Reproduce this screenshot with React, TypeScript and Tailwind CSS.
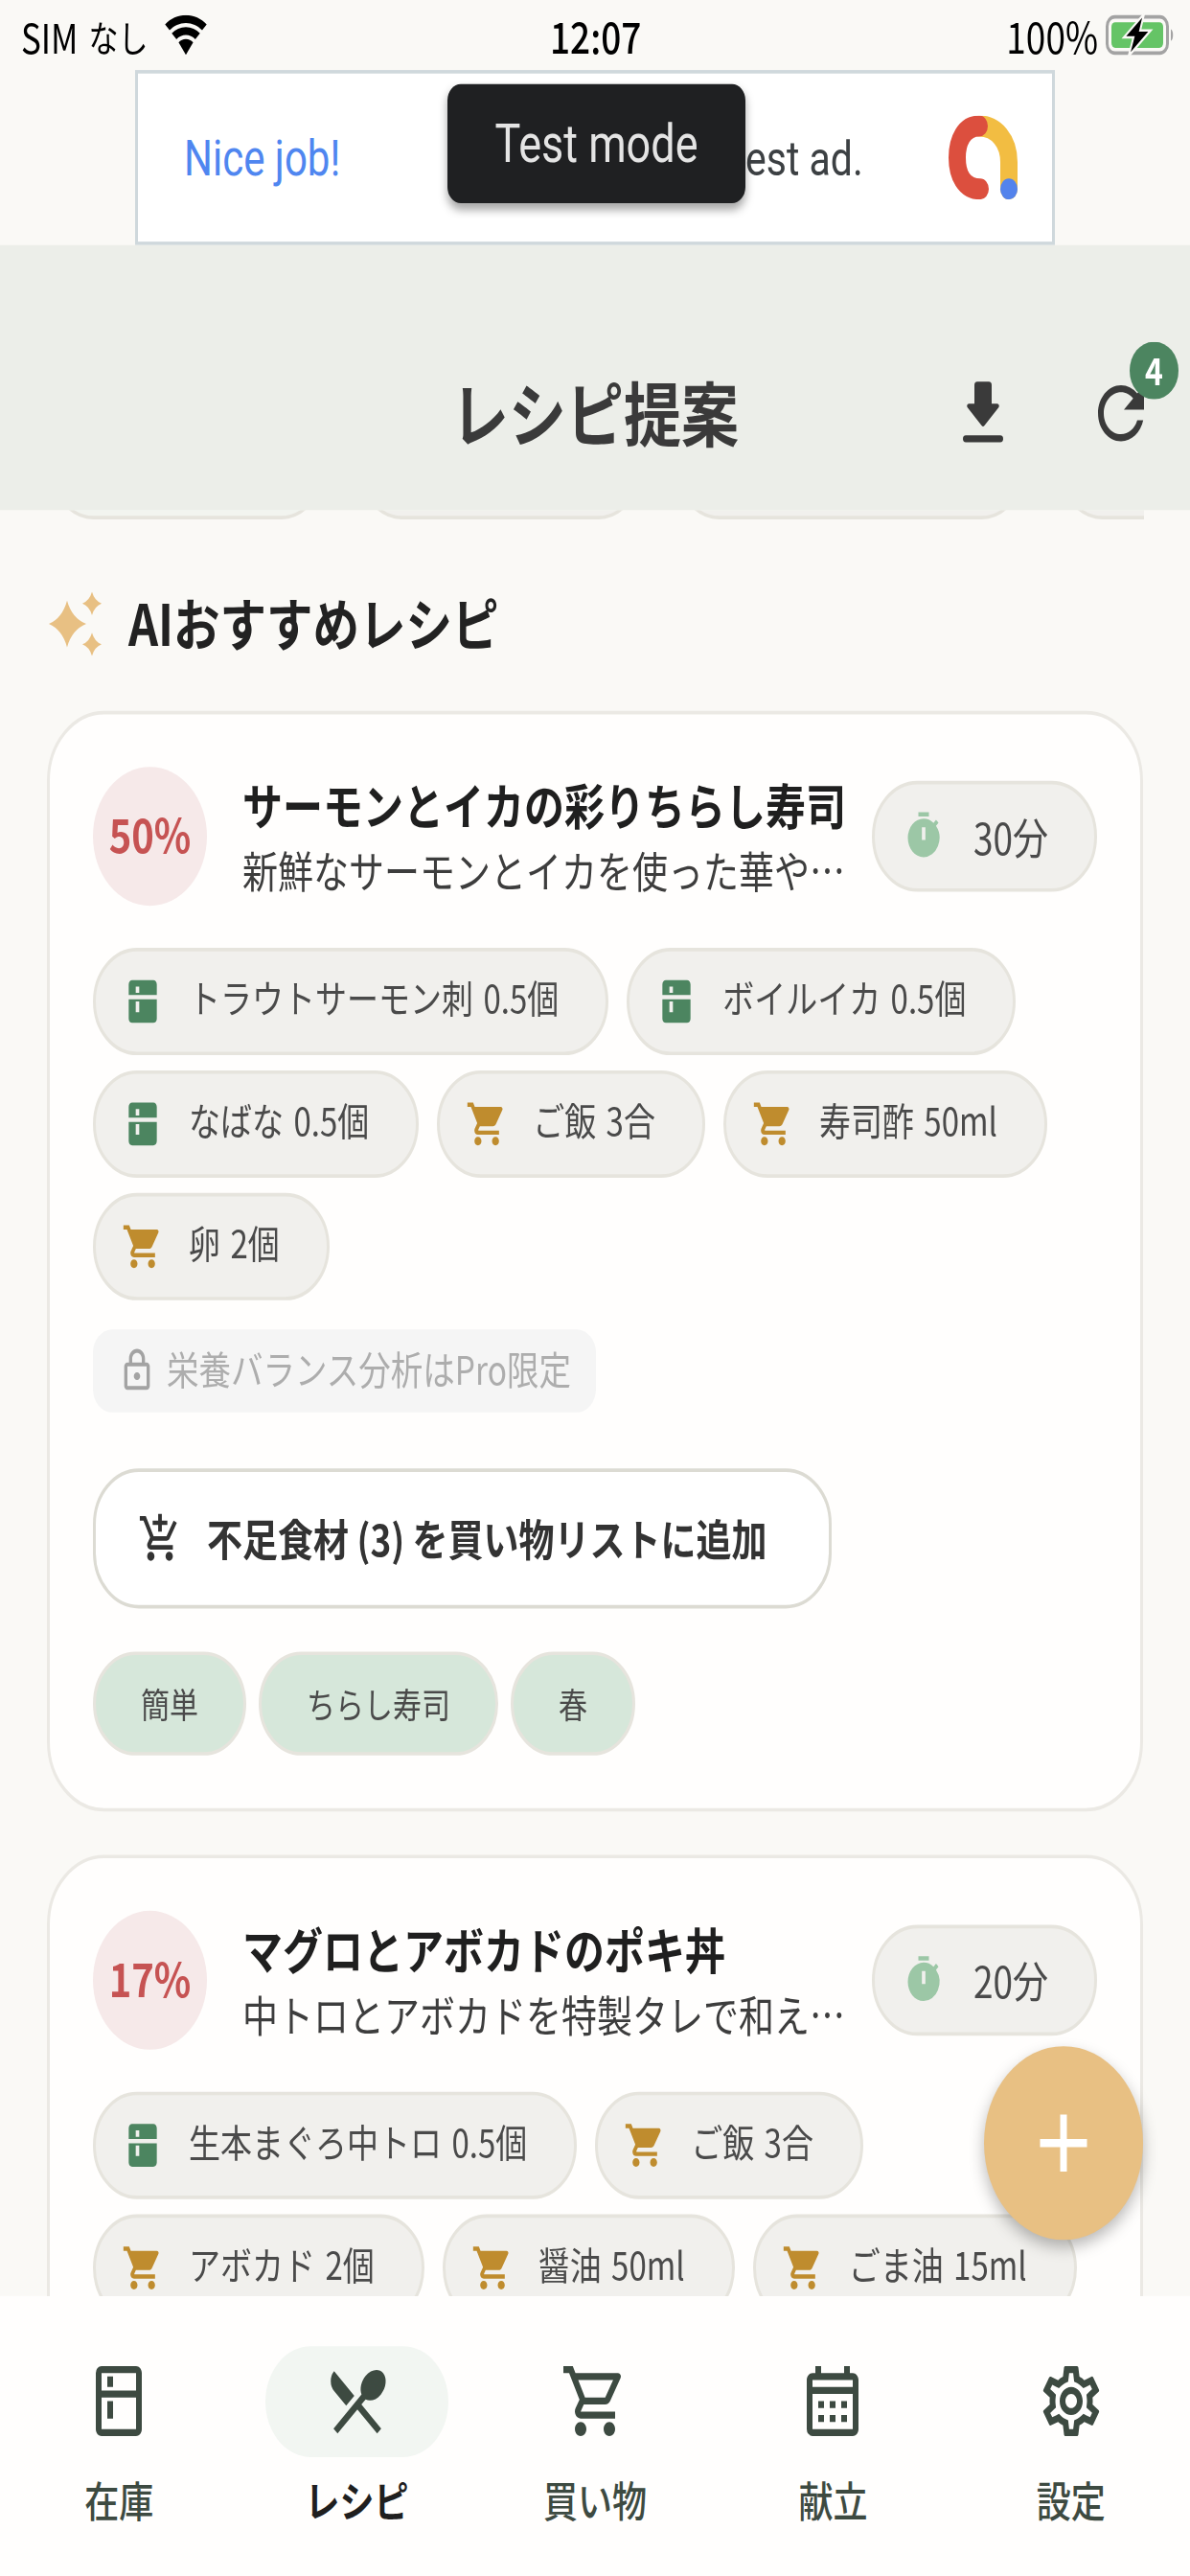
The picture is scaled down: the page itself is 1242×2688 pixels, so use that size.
import {
  MdKitchen, MdOutlineKitchen, MdShoppingCart, MdOutlineShoppingCart, MdTimer, MdOutlineLock,
  MdOutlineAddShoppingCart, MdAdd, MdRefresh, MdRestaurantMenu,
  MdOutlineCalendarMonth, MdOutlineSettings,
} from "react-icons/md";

const jp = "font-['Noto_Sans_CJK_JP','Noto_Sans',sans-serif]";

function Chip({ kind, text }: { kind: "have" | "buy"; text: string }) {
  return (
    <div className="flex h-[92px] items-center gap-[26px] rounded-full border-[3px] border-[#e6e4dd] bg-[#f1f0ed] pl-[27px] pr-[49px]">
      {kind === "have" ? (
        <MdKitchen className="h-[44px] w-[44px] shrink-0 text-[#4c8560]" />
      ) : (
        <MdShoppingCart className="h-[44px] w-[44px] shrink-0 text-[#bf8c2e]" />
      )}
      <span className="whitespace-nowrap pb-[6px] text-[33px] leading-none text-[#4a4a4a] [word-spacing:3px]">{text}</span>
    </div>
  );
}

function Card({
  pct, title, sub, time, chips, extra,
}: {
  pct: string; title: string; sub: string; time: string;
  chips: { kind: "have" | "buy"; text: string }[]; extra?: boolean;
}) {
  return (
    <div className="mx-[49px] shrink-0 rounded-[60px] border-[3px] border-[#ebe9e4] bg-[#fffefd] pb-[45px] pl-[45px] pr-[44px] pt-[45px]">
      <div className="flex items-center">
        <div className="flex h-[119px] w-[119px] shrink-0 items-center justify-center rounded-full bg-[#f6e9e9] pb-[5px] text-[40px] font-semibold text-[#c65353]">{pct}</div>
        <div className="ml-[37px] w-[632px] shrink-0 pt-[2px]">
          <div className="truncate text-[42px] font-bold leading-[56px] text-[#1f1f1f]">{title}</div>
          <div className="truncate text-[37px] leading-[56px] text-[#3d3d3d]">{sub}</div>
        </div>
        <div className="ml-[25px] flex h-[95px] w-[235px] shrink-0 items-center rounded-full border-[3px] border-[#e6e4dd] bg-[#f1f0ed] pl-[29px]">
          <MdTimer className="h-[44px] w-[44px] shrink-0 text-[#9cc7a6]" />
          <span className="ml-[30px] whitespace-nowrap text-[37px] leading-none text-[#4a4a4a]">{time}</span>
        </div>
      </div>
      <div className="mt-[36px] flex flex-wrap gap-x-[19px] gap-y-[13px]">
        {chips.map((c) => (
          <Chip key={c.text} {...c} />
        ))}
      </div>
      {extra && (
        <>
          <div className="mt-[25px] flex h-[71px] w-[525px] items-center rounded-[20px] bg-[#f5f5f5] pl-[26px]">
            <MdOutlineLock className="h-[40px] w-[40px] shrink-0 text-[#a3a3a3]" />
            <span className="ml-[11px] whitespace-nowrap pb-[5px] text-[33.5px] leading-none text-[#adadad]">栄養バランス分析はPro限定</span>
          </div>
          <div className="mt-[48px] flex h-[120px] w-[771px] items-center rounded-[48px] border-[3px] border-[#dcdbd3] bg-white pl-[44px]">
            <MdOutlineAddShoppingCart className="h-[46px] w-[46px] shrink-0 text-[#333333]" />
            <span className="ml-[26px] whitespace-nowrap text-[37px] font-semibold leading-none text-[#333333]">不足食材 (3) を買い物リストに追加</span>
          </div>
          <div className="mt-[37px] flex gap-[13px]">
            {["簡単", "ちらし寿司", "春"].map((t) => (
              <div key={t} className="flex h-[89px] items-center rounded-full border-[3px] border-[#e6e4dd] bg-[#d6e7da] px-[47px] text-[30px] leading-none text-[#4a4a4a]">{t}</div>
            ))}
          </div>
        </>
      )}
    </div>
  );
}

const navItems = [
  { label: "在庫", Icon: MdOutlineKitchen },
  { label: "レシピ", Icon: MdRestaurantMenu, active: true },
  { label: "買い物", Icon: MdOutlineShoppingCart },
  { label: "献立", Icon: MdOutlineCalendarMonth },
  { label: "設定", Icon: MdOutlineSettings },
];

export default function App() {
  return (
    <div className={`h-[2688px] w-[1242px] overflow-hidden bg-[#faf9f6] ${jp}`}>
      <div className="flex h-[2207px] w-[1242px] origin-top scale-y-[1.218] flex-col">
        {/* status bar */}
        <div className="relative flex h-[60px] shrink-0 items-center justify-between pl-[22px] pr-[16px] text-[37px] leading-none text-black">
          <div className="flex items-center">
            <span className="text-[35px]">SIM</span>
            <span className="ml-[11px] text-[31px]">なし</span>
            <svg viewBox="0 0 24 18" className="ml-[16px] h-[34px] w-[46px]" fill="currentColor">
              <path d="M12 3.500c3.400 0 6.500 1.200 9 3.300L23.500 4.200C20.400 1.500 16.400 0 12 0S3.600 1.500.5 4.200L3 6.800c2.500-2.100 5.600-3.300 9-3.300z" />
              <path d="M12 9c2 0 3.800.7 5.200 1.900l2.600-2.700C17.700 6.400 15 5.400 12 5.400S6.300 6.400 4.200 8.200l2.600 2.700C8.200 9.700 10 9 12 9z" />
              <path d="M12 10.800c-1.600 0-3 .6-4 1.500L12 18l4-5.700c-1-.9-2.400-1.500-4-1.500z" />
            </svg>
          </div>
          <span className="absolute left-[574px] font-medium">12:07</span>
          <div className="flex items-center gap-[8px]">
            <span>100%</span>
            <svg viewBox="0 0 72 36" className="h-[36px] w-[72px]">
              <rect x="1.500" y="2.500" width="63" height="31" rx="8" fill="none" stroke="#a3a3a3" strokeWidth="3" />
              <rect x="6" y="7" width="54" height="22" rx="4" fill="#65c466" />
              <path d="M68 13c3 1 3 9 0 10z" fill="#a3a3a3" />
              <path d="M40 0 19 20h10l-5 16 23-22H36z" fill="#000" stroke="#faf9f6" strokeWidth="2" />
            </svg>
          </div>
        </div>

        {/* ad banner */}
        <div className="relative mx-auto flex h-[149.500px] w-[960px] shrink-0 items-center border-[3px] border-[#cfd8dc] bg-white pt-[3px] font-['Roboto',sans-serif]">
          <span className="ml-[48px] text-[42px] leading-none text-[#4f86f0]">Nice job!</span>
          <span className="absolute left-[634px] text-[41px] leading-none text-[#3c4043]">est ad.</span>
          <svg viewBox="0 0 72 72" className="absolute left-[846px] top-[36px] h-[72px] w-[72px]">
            <path d="M32 9C50 9 63 22 63 40V63" fill="none" stroke="#f2bd42" strokeWidth="18" strokeLinecap="round" />
            <path d="M32 9C16 9 9 22 9 36C9 50 16 63 33 63" fill="none" stroke="#dc4f3e" strokeWidth="18" strokeLinecap="round" />
            <circle cx="63" cy="63" r="9" fill="#5383ec" />
          </svg>
          <div className="absolute left-[323px] top-[9px] flex h-[102px] w-[311px] items-center justify-center rounded-[14px] bg-[#1f2022] text-[45px] leading-none text-[#e4e4e4] shadow-[0_5px_9px_rgba(0,0,0,0.35)]">
            Test mode
          </div>
        </div>

        {/* header */}
        <div className="relative z-10 flex h-[227px] shrink-0 items-center justify-center bg-[#eceee9] pt-[58px]">
          <h1 className="text-[60px] font-semibold leading-none text-[#3a3a3a]">レシピ提案</h1>
          <svg viewBox="0 0 24 24" className="absolute left-[990px] top-[108px] h-[72px] w-[72px]" fill="#3a3a3a">
            <path d="M10 3h4a1 1 0 0 1 1 1v5.300h1.900c.6 0 .9.700.5 1.100L12.500 15.500a.7.7 0 0 1-1 0L6.600 10.400c-.4-.4-.1-1.100.5-1.100H9V4a1 1 0 0 1 1-1z" />
            <rect x="5" y="18.300" width="14" height="2" rx="1" />
          </svg>
          <div className="absolute left-[1134px] top-[108px]">
            <MdRefresh className="h-[72px] w-[72px] text-[#3a3a3a]" />
            <div className="absolute left-[45px] top-[-25px] flex h-[49px] w-[51px] items-center justify-center rounded-full bg-[#4c8560] pb-[3px] text-[32px] font-bold leading-none text-white">4</div>
          </div>
        </div>

        {/* scrolling content */}
        <div className="relative flex min-h-0 flex-1 flex-col overflow-hidden">
          <div className="flex h-[8px] w-[1194px] shrink-0 items-end gap-[35px] overflow-hidden pl-[52px]">
            <div className="h-[92px] w-[287px] shrink-0 rounded-full border-[3px] border-[#e6e4dd] bg-[#f2f4ef]" />
            <div className="h-[92px] w-[296px] shrink-0 rounded-full border-[3px] border-[#e6e4dd] bg-[#f1f0ed]" />
            <div className="h-[92px] w-[365px] shrink-0 rounded-full border-[3px] border-[#e6e4dd] bg-[#f1f0ed]" />
            <div className="h-[92px] w-[300px] shrink-0 rounded-full border-[3px] border-[#e6e4dd] bg-[#f1f0ed]" />
          </div>
          <div className="ml-[51px] mt-[60px] flex h-[60px] shrink-0 items-center">
            <svg viewBox="0 0 57 55" className="h-[55px] w-[57px]" fill="#e8c083">
              <path d="M19 7.500Q24 22.500 39 27.500Q24 32.500 19 47.500Q14 32.500 0 27.500Q14 22.500 19 7.500Z" />
              <path d="M45 0Q47.500 7.500 55 10Q47.500 12.500 45 20Q42.500 12.500 35 10Q42.500 7.500 45 0Z" />
              <path d="M45 35Q47.500 42.500 55 45Q47.500 47.500 45 55Q42.500 47.500 35 45Q42.500 42.500 45 35Z" />
            </svg>
            <span className="ml-[26px] pb-[5px] text-[48.5px] font-bold leading-none text-[#222222]">AIおすすめレシピ</span>
          </div>
          <div className="mt-[44px] flex flex-col gap-[37px]">
            <Card
              pct="50%"
              title="サーモンとイカの彩りちらし寿司"
              sub="新鮮なサーモンとイカを使った華やかなちらし寿司"
              time="30分"
              extra
              chips={[
                { kind: "have", text: "トラウトサーモン刺 0.5個" },
                { kind: "have", text: "ボイルイカ 0.5個" },
                { kind: "have", text: "なばな 0.5個" },
                { kind: "buy", text: "ご飯 3合" },
                { kind: "buy", text: "寿司酢 50ml" },
                { kind: "buy", text: "卵 2個" },
              ]}
            />
            <Card
              pct="17%"
              title="マグロとアボカドのポキ丼"
              sub="中トロとアボカドを特製タレで和えたポキ丼です"
              time="20分"
              chips={[
                { kind: "have", text: "生本まぐろ中トロ 0.5個" },
                { kind: "buy", text: "ご飯 3合" },
                { kind: "buy", text: "アボカド 2個" },
                { kind: "buy", text: "醤油 50ml" },
                { kind: "buy", text: "ごま油 15ml" },
              ]}
            />
          </div>
          <div className="absolute bottom-[48px] right-[49px] flex h-[166px] w-[166px] items-center justify-center rounded-full bg-[#e8c083] shadow-[0_6px_14px_rgba(0,0,0,0.28)]">
            <MdAdd className="h-[84px] w-[84px] text-white" />
          </div>
        </div>

        {/* bottom nav */}
        <div className="grid h-[240.500px] shrink-0 grid-cols-5 bg-[#fffefd]">
          {navItems.map(({ label, Icon, active }) => (
            <div key={label} className="flex flex-col items-center pt-[43px]">
              <div className={`flex h-[95px] w-[191px] items-center justify-center rounded-full ${active ? "bg-[#f2f6f2]" : ""}`}>
                <Icon className="h-[72px] w-[72px] text-[#3d4a41]" />
              </div>
              <span className={`mt-[11px] text-[36px] leading-[50px] ${active ? "font-bold text-[#1f1f1f]" : "font-medium text-[#3d4a41]"}`}>{label}</span>
            </div>
          ))}
        </div>
      </div>
    </div>
  );
}
